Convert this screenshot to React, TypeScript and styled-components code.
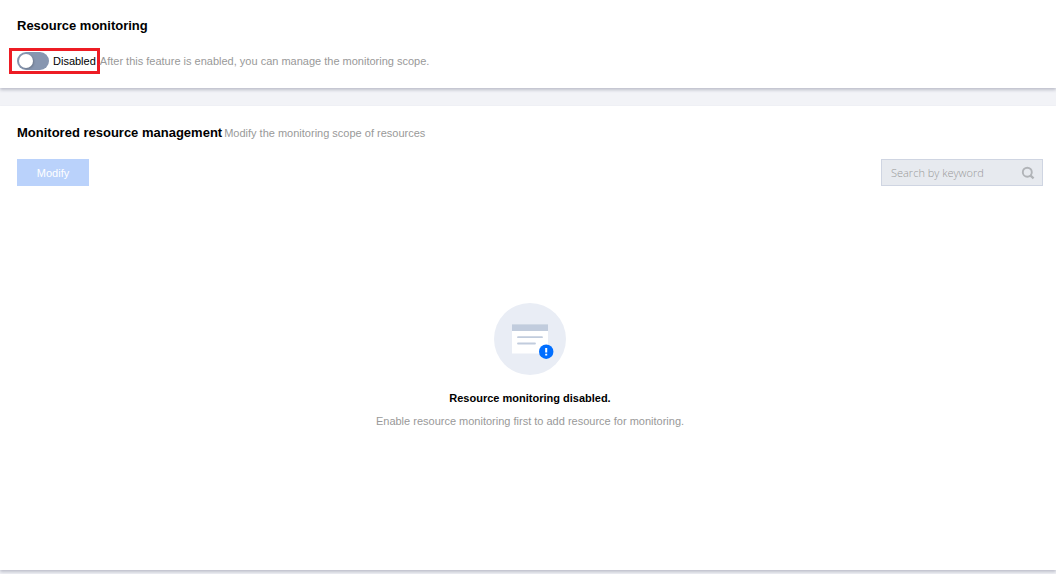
import React, { useState } from "react";
import styled, { createGlobalStyle } from "styled-components";

const GlobalStyle = createGlobalStyle`
  *, *::before, *::after { box-sizing: border-box; }
  body {
    margin: 0;
    background: #f2f3f7;
    color: #000;
    font: 11px/18px "Liberation Sans", Arial, sans-serif;
  }
`;

const Page = styled.main`
  display: flex;
  flex-direction: column;
  gap: 18px;
  min-height: 100vh;
  padding-bottom: 4px;
`;

const Card = styled.section<{ $fill?: boolean }>`
  flex: ${(p) => (p.$fill ? "1 0 auto" : "none")};
  padding: ${(p) => (p.$fill ? "17px 13px 17px 17px" : "16px 13px 14px 17px")};
  background: #fff;
  box-shadow: 0 2px 3px rgba(54, 58, 90, 0.28);
`;

const Title = styled.h2`
  margin: 0;
  font-size: 13px;
  line-height: 20px;
  font-weight: 700;
`;

const Heading = styled.header`
  display: flex;
  align-items: center;
  gap: 2px;
`;

const Hint = styled.p`
  margin: 0;
  color: #999;
`;

const SwitchRow = styled.div`
  display: flex;
  align-items: center;
  margin: 12px 0 0 -8px;
`;

const SwitchLabel = styled.label`
  display: flex;
  align-items: center;
  gap: 4px;
  padding: 1px 1px 1px 5px;
  border: 3px solid #ed1c24;
`;

const Switch = styled.input`
  appearance: none;
  display: flex;
  align-items: center;
  width: 32px;
  height: 18px;
  margin: 0;
  padding: 0 2px;
  border-radius: 9px;
  background: #8796b0;
  cursor: pointer;

  &::before {
    content: "";
    width: 14px;
    height: 14px;
    border-radius: 50%;
    background: #fff;
    box-shadow: 1px 1px 2px rgba(0, 0, 0, 0.2);
  }

  &:checked {
    justify-content: flex-end;
    background: #006eff;
  }
`;

const Toolbar = styled.div`
  display: flex;
  justify-content: space-between;
  align-items: center;
  margin-top: 16px;
`;

const Button = styled.button`
  width: 72px;
  height: 27px;
  padding: 1px 0 0;
  border: 0;
  background: #006eff;
  color: #fff;
  font: inherit;

  &:disabled {
    background: #bad2fb;
  }
`;

const SearchBox = styled.label`
  display: flex;
  align-items: center;
  width: 162px;
  height: 27px;
  padding: 0 7px 0 9px;
  border: 1px solid #cfd5e2;
  background: #e7eaef;
`;

const SearchInput = styled.input`
  flex: 1;
  min-width: 0;
  height: 24px;
  padding: 0;
  border: 0;
  outline: 0;
  background: transparent;
  font: 300 11px/18px "Open Sans", sans-serif;

  &::placeholder {
    color: #999;
    opacity: 1;
  }
`;

const EmptyState = styled.div`
  display: flex;
  flex-direction: column;
  align-items: center;
  padding: 117px 0 100px;
  text-align: center;
`;

const EmptyTitle = styled.h3`
  margin: 14px 0 5px;
  font-size: 11px;
  line-height: 18px;
`;

function SearchIcon() {
  return (
    <svg width="14" height="14" viewBox="0 0 14 14" fill="none" stroke="#b1b4b8" strokeWidth="1.9" aria-hidden="true">
      <circle cx="6.3" cy="6.2" r="4.5" />
      <path d="M9 9.2 12.6 12.4" strokeWidth="2.4" />
    </svg>
  );
}

function EmptyIllustration() {
  return (
    <svg width="72" height="72" viewBox="0 0 72 72" aria-hidden="true">
      <circle cx="36" cy="36" r="36" fill="#e9edf5" />
      <path d="M18 21h36v29.5H18z" fill="#fff" />
      <path d="M18 21.3h36v6.7H18z" fill="#c1ccdd" />
      <path d="M24 34.2h24M24 40.5h17" stroke="#c1ccdd" strokeWidth="1.8" strokeLinecap="round" />
      <circle cx="52.2" cy="48.7" r="7.2" fill="#006eff" />
      <path d="M51.2 45h2v4.6h-2zM51.2 50.7h2v1.8h-2z" fill="#fff" />
    </svg>
  );
}

export default function App() {
  const [enabled, setEnabled] = useState(false);

  return (
    <>
      <GlobalStyle />
      <Page>
        <Card>
          <Title>Resource monitoring</Title>
          <SwitchRow>
            <SwitchLabel>
              <Switch
                type="checkbox"
                role="switch"
                checked={enabled}
                onChange={(e) => setEnabled(e.target.checked)}
              />
              {enabled ? "Enabled" : "Disabled"}
            </SwitchLabel>
            <Hint>After this feature is enabled, you can manage the monitoring scope.</Hint>
          </SwitchRow>
        </Card>
        <Card $fill>
          <Heading>
            <Title>Monitored resource management</Title>
            <Hint>Modify the monitoring scope of resources</Hint>
          </Heading>
          <Toolbar>
            <Button type="button" disabled={!enabled}>Modify</Button>
            <SearchBox>
              <SearchInput
                type="text"
                aria-label="Search by keyword"
                placeholder="Search by keyword"
                disabled={!enabled}
              />
              <SearchIcon />
            </SearchBox>
          </Toolbar>
          {!enabled && (
            <EmptyState>
              <EmptyIllustration />
              <EmptyTitle>Resource monitoring disabled.</EmptyTitle>
              <Hint>Enable resource monitoring first to add resource for monitoring.</Hint>
            </EmptyState>
          )}
        </Card>
      </Page>
    </>
  );
}
